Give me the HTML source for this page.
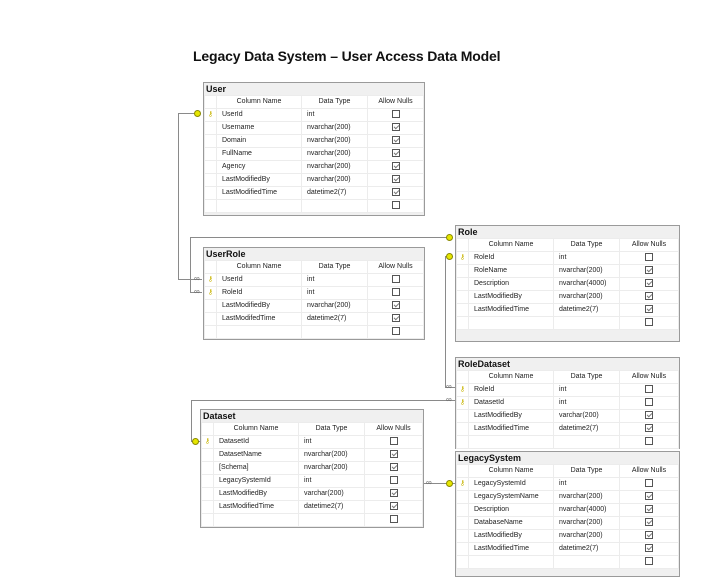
<!DOCTYPE html>
<html><head><meta charset="utf-8"><style>
body{margin:0;width:717px;height:587px;background:#fff;position:relative;overflow:hidden;font-family:"Liberation Sans",sans-serif;}
h1{position:absolute;left:193px;top:48px;margin:0;font-size:14px;font-weight:bold;color:#111;letter-spacing:-0.15px}
.t{position:absolute;border:1px solid #9a9a9a;background:#f0f0f0;box-sizing:border-box}
.t .ti{height:12px;line-height:12px;font-size:9px;font-weight:bold;padding-left:2px;color:#111}
table{border-collapse:collapse;background:#fff;font-size:7px;color:#222;table-layout:fixed;width:100%}
td{height:12px;border:1px solid #ececec;padding:0 0 0 5px;white-space:nowrap;overflow:hidden;line-height:12px}
tr.hd td{text-align:center;padding:0}
td.s{width:11px;padding:0;text-align:center;color:#c8b400;font-size:7px}
td.n{width:84px}td.d{width:65px}
td.c{text-align:center;padding:0}
.cb{display:inline-block;width:8px;height:8px;border:1px solid #555;box-sizing:border-box;vertical-align:middle;position:relative;background:#fff}
.ck::after{content:"";position:absolute;left:2px;top:0px;width:2px;height:4px;border:solid #777;border-width:0 1px 1px 0;transform:rotate(45deg)}
.ln{position:absolute;background:#8a8a8a}
.k{position:absolute;width:5px;height:5px;border-radius:50%;border:1px solid #8a8a00;background:#e6e600}
.inf{position:absolute;font-size:8px;color:#666;line-height:8px}
</style></head><body>
<h1>Legacy Data System – User Access Data Model</h1>

<div class="ln" style="left:178px;top:113px;width:22px;height:1px"></div>
<div class="ln" style="left:178px;top:113px;width:1px;height:166px"></div>
<div class="ln" style="left:178px;top:279px;width:24px;height:1px"></div>
<div class="k" style="left:194px;top:110px"></div>
<div class="inf" style="left:194px;top:275px">∞</div>

<div class="ln" style="left:190px;top:237px;width:262px;height:1px"></div>
<div class="ln" style="left:190px;top:237px;width:1px;height:55px"></div>
<div class="ln" style="left:190px;top:292px;width:12px;height:1px"></div>
<div class="k" style="left:446px;top:234px"></div>
<div class="inf" style="left:194px;top:288px">∞</div>

<div class="ln" style="left:445px;top:256px;width:8px;height:1px"></div>
<div class="ln" style="left:445px;top:256px;width:1px;height:131px"></div>
<div class="ln" style="left:445px;top:387px;width:10px;height:1px"></div>
<div class="k" style="left:446px;top:253px"></div>
<div class="inf" style="left:446px;top:383px">∞</div>

<div class="ln" style="left:191px;top:400px;width:264px;height:1px"></div>
<div class="ln" style="left:191px;top:400px;width:1px;height:41px"></div>
<div class="ln" style="left:191px;top:441px;width:9px;height:1px"></div>
<div class="k" style="left:192px;top:438px"></div>
<div class="inf" style="left:446px;top:396px">∞</div>

<div class="ln" style="left:424px;top:483px;width:31px;height:1px"></div>
<div class="k" style="left:446px;top:480px"></div>
<div class="inf" style="left:426px;top:479px">∞</div>

<div class="t" style="left:203px;top:82px;width:222px;height:134px">
<div class="ti">User</div>
<table>
<tr class="hd"><td class="s"></td><td class="n">Column Name</td><td class="d">Data Type</td><td>Allow Nulls</td></tr>
<tr><td class="s">⚷</td><td>UserId</td><td>int</td><td class="c"><span class="cb"></span></td></tr>
<tr><td class="s"></td><td>Username</td><td>nvarchar(200)</td><td class="c"><span class="cb ck"></span></td></tr>
<tr><td class="s"></td><td>Domain</td><td>nvarchar(200)</td><td class="c"><span class="cb ck"></span></td></tr>
<tr><td class="s"></td><td>FullName</td><td>nvarchar(200)</td><td class="c"><span class="cb ck"></span></td></tr>
<tr><td class="s"></td><td>Agency</td><td>nvarchar(200)</td><td class="c"><span class="cb ck"></span></td></tr>
<tr><td class="s"></td><td>LastModifiedBy</td><td>nvarchar(200)</td><td class="c"><span class="cb ck"></span></td></tr>
<tr><td class="s"></td><td>LastModifiedTime</td><td>datetime2(7)</td><td class="c"><span class="cb ck"></span></td></tr>
<tr><td class="s"></td><td></td><td></td><td class="c"><span class="cb"></span></td></tr>
</table></div>

<div class="t" style="left:203px;top:247px;width:222px;height:93px">
<div class="ti">UserRole</div>
<table>
<tr class="hd"><td class="s"></td><td class="n">Column Name</td><td class="d">Data Type</td><td>Allow Nulls</td></tr>
<tr><td class="s">⚷</td><td>UserId</td><td>int</td><td class="c"><span class="cb"></span></td></tr>
<tr><td class="s">⚷</td><td>RoleId</td><td>int</td><td class="c"><span class="cb"></span></td></tr>
<tr><td class="s"></td><td>LastModifiedBy</td><td>nvarchar(200)</td><td class="c"><span class="cb ck"></span></td></tr>
<tr><td class="s"></td><td>LastModifedTime</td><td>datetime2(7)</td><td class="c"><span class="cb ck"></span></td></tr>
<tr><td class="s"></td><td></td><td></td><td class="c"><span class="cb"></span></td></tr>
</table></div>

<div class="t" style="left:455px;top:225px;width:225px;height:117px">
<div class="ti">Role</div>
<table>
<tr class="hd"><td class="s"></td><td class="n">Column Name</td><td class="d">Data Type</td><td>Allow Nulls</td></tr>
<tr><td class="s">⚷</td><td>RoleId</td><td>int</td><td class="c"><span class="cb"></span></td></tr>
<tr><td class="s"></td><td>RoleName</td><td>nvarchar(200)</td><td class="c"><span class="cb ck"></span></td></tr>
<tr><td class="s"></td><td>Description</td><td>nvarchar(4000)</td><td class="c"><span class="cb ck"></span></td></tr>
<tr><td class="s"></td><td>LastModifiedBy</td><td>nvarchar(200)</td><td class="c"><span class="cb ck"></span></td></tr>
<tr><td class="s"></td><td>LastModifiedTime</td><td>datetime2(7)</td><td class="c"><span class="cb ck"></span></td></tr>
<tr><td class="s"></td><td></td><td></td><td class="c"><span class="cb"></span></td></tr>
</table></div>

<div class="t" style="left:455px;top:357px;width:225px;height:92px">
<div class="ti">RoleDataset</div>
<table>
<tr class="hd"><td class="s"></td><td class="n">Column Name</td><td class="d">Data Type</td><td>Allow Nulls</td></tr>
<tr><td class="s">⚷</td><td>RoleId</td><td>int</td><td class="c"><span class="cb"></span></td></tr>
<tr><td class="s">⚷</td><td>DatasetId</td><td>int</td><td class="c"><span class="cb"></span></td></tr>
<tr><td class="s"></td><td>LastModifiedBy</td><td>varchar(200)</td><td class="c"><span class="cb ck"></span></td></tr>
<tr><td class="s"></td><td>LastModifiedTime</td><td>datetime2(7)</td><td class="c"><span class="cb ck"></span></td></tr>
<tr><td class="s"></td><td></td><td></td><td class="c"><span class="cb"></span></td></tr>
</table></div>

<div class="t" style="left:200px;top:409px;width:224px;height:119px">
<div class="ti">Dataset</div>
<table>
<tr class="hd"><td class="s"></td><td class="n">Column Name</td><td class="d">Data Type</td><td>Allow Nulls</td></tr>
<tr><td class="s">⚷</td><td>DatasetId</td><td>int</td><td class="c"><span class="cb"></span></td></tr>
<tr><td class="s"></td><td>DatasetName</td><td>nvarchar(200)</td><td class="c"><span class="cb ck"></span></td></tr>
<tr><td class="s"></td><td>[Schema]</td><td>nvarchar(200)</td><td class="c"><span class="cb ck"></span></td></tr>
<tr><td class="s"></td><td>LegacySystemId</td><td>int</td><td class="c"><span class="cb"></span></td></tr>
<tr><td class="s"></td><td>LastModifiedBy</td><td>varchar(200)</td><td class="c"><span class="cb ck"></span></td></tr>
<tr><td class="s"></td><td>LastModifiedTime</td><td>datetime2(7)</td><td class="c"><span class="cb ck"></span></td></tr>
<tr><td class="s"></td><td></td><td></td><td class="c"><span class="cb"></span></td></tr>
</table></div>

<div class="t" style="left:455px;top:451px;width:225px;height:126px">
<div class="ti">LegacySystem</div>
<table>
<tr class="hd"><td class="s"></td><td class="n">Column Name</td><td class="d">Data Type</td><td>Allow Nulls</td></tr>
<tr><td class="s">⚷</td><td>LegacySystemId</td><td>int</td><td class="c"><span class="cb"></span></td></tr>
<tr><td class="s"></td><td>LegacySystemName</td><td>nvarchar(200)</td><td class="c"><span class="cb ck"></span></td></tr>
<tr><td class="s"></td><td>Description</td><td>nvarchar(4000)</td><td class="c"><span class="cb ck"></span></td></tr>
<tr><td class="s"></td><td>DatabaseName</td><td>nvarchar(200)</td><td class="c"><span class="cb ck"></span></td></tr>
<tr><td class="s"></td><td>LastModifiedBy</td><td>nvarchar(200)</td><td class="c"><span class="cb ck"></span></td></tr>
<tr><td class="s"></td><td>LastModifiedTime</td><td>datetime2(7)</td><td class="c"><span class="cb ck"></span></td></tr>
<tr><td class="s"></td><td></td><td></td><td class="c"><span class="cb"></span></td></tr>
</table></div>
</body></html>
